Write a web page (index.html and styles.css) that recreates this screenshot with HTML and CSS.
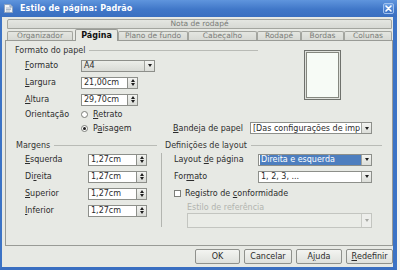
FILE: index.html
```html
<!DOCTYPE html>
<html lang="pt">
<head>
<meta charset="utf-8">
<title>Estilo de página: Padrão</title>
<link rel="stylesheet" href="styles.css">
</head>
<body>
<div class="window">
  <div class="titlebar">
    <svg class="app-icon" width="11" height="11" viewBox="0 0 11 11">
      <path d="M1.5 1.5h5.5l2.5 2.5v5.5h-8z" fill="#f2f4f7" stroke="#8fa3bf"/>
      <path d="M7 1.5v2.5h2.5" fill="#c9d3e0" stroke="#8fa3bf"/>
      <path d="M3 5h5M3 6.5h5M3 8h4" stroke="#9aa9bd" stroke-width="0.8"/>
    </svg>
    <span class="title">Estilo de página: Padrão</span>
    <span class="close">
      <svg width="7" height="7" viewBox="0 0 7 7"><path d="M1 1l5 5M6 1l-5 5" stroke="#fff" stroke-width="1.6" stroke-linecap="round"/></svg>
    </span>
  </div>
  <div class="client">
    <div class="tabrow tabrow-back">
      <div class="tab tab-wide">Nota de rodapé</div>
    </div>
    <div class="tabrow tabrow-front">
      <div class="tab t-org">Organizador</div>
      <div class="tab tab-active t-pag">Página</div>
      <div class="tab t-pla">Plano de fundo</div>
      <div class="tab t-cab">Cabeçalho</div>
      <div class="tab t-rod">Rodapé</div>
      <div class="tab t-bor">Bordas</div>
      <div class="tab t-col">Colunas</div>
    </div>
    <div class="panel">
      <div class="paper">
        <div class="paper-left">
          <div class="group-title"><span>Formato do papel</span></div>
          <div class="rows">
            <div class="row r17"><span class="lbl w56"><u>F</u>ormato</span>
              <div class="dropbtn w74"><span class="combo-text">A4</span><span class="arrow-btn"><i class="arrow"></i></span></div>
            </div>
            <div class="row r17"><span class="lbl w56"><u>L</u>argura</span>
              <div class="spin w57"><span class="spin-field">21,00cm</span><span class="spin-btns"></span></div>
            </div>
            <div class="row r17"><span class="lbl w56"><u>A</u>ltura</span>
              <div class="spin w57"><span class="spin-field">29,70cm</span><span class="spin-btns"></span></div>
            </div>
            <div class="row r13"><span class="lbl w56">Orientação</span>
              <span class="radio"></span><span class="opt"><u>R</u>etrato</span>
            </div>
          </div>
        </div>
        <div class="preview"></div>
        <div class="row r14 paper-last"><span class="lbl w56"></span>
          <span class="radio-cell"><span class="radio radio-on"></span><span class="opt">P<u>a</u>isagem</span></span>
          <span class="lbl w77"><u>B</u>andeja de papel</span>
          <div class="combo w122"><span class="combo-text">[Das configurações de imp</span><span class="arrow-btn"><i class="arrow"></i></span></div>
        </div>
      </div>
      <div class="layout">
        <div class="group-title gt-left"><span>Margens</span></div>
        <div class="group-title gt-right"><span>Definições de layout</span></div>
        <div class="margins">
          <div class="row r17"><span class="lbl w63"><u>E</u>squerda</span>
            <div class="spin w59"><span class="spin-field">1,27cm</span><span class="spin-btns"></span></div>
          </div>
          <div class="row r17"><span class="lbl w63">Di<u>r</u>eita</span>
            <div class="spin w59"><span class="spin-field">1,27cm</span><span class="spin-btns"></span></div>
          </div>
          <div class="row r17"><span class="lbl w63"><u>S</u>uperior</span>
            <div class="spin w59"><span class="spin-field">1,27cm</span><span class="spin-btns"></span></div>
          </div>
          <div class="row r17"><span class="lbl w63"><u>I</u>nferior</span>
            <div class="spin w59"><span class="spin-field">1,27cm</span><span class="spin-btns"></span></div>
          </div>
        </div>
        <div class="vsep"></div>
        <div class="settings">
          <div class="row r17"><span class="lbl w84">Layout <u>d</u>e página</span>
            <div class="combo w114"><span class="combo-text"><span class="sel">Direita e esquerda</span></span><span class="arrow-btn"><i class="arrow"></i></span></div>
          </div>
          <div class="row r17"><span class="lbl w84">For<u>m</u>ato</span>
            <div class="combo w114"><span class="combo-text">1, 2, 3, ...</span><span class="arrow-btn"><i class="arrow"></i></span></div>
          </div>
          <div class="row r17"><span class="check"></span><span class="opt">Registro de <u>c</u>onformidade</span></div>
          <div class="row r10 indent"><span class="lbl disabled">Estilo de referência</span></div>
          <div class="combo combo-disabled w185 indent-box"><span class="combo-text"></span><span class="arrow-btn"><i class="arrow"></i></span></div>
        </div>
      </div>
    </div>
    <div class="buttons">
      <span class="btn b-ok">OK</span>
      <span class="btn b-cancel">Cancelar</span>
      <span class="btn b-help">A<u>j</u>uda</span>
      <span class="btn b-reset"><u>R</u>edefinir</span>
    </div>
  </div>
</div>
</body>
</html>
```

FILE: styles.css
```css
* { box-sizing: border-box; }

body {
  margin: 0;
  width: 400px;
  height: 270px;
  overflow: hidden;
  background: #f4f5f3;
  font-family: "DejaVu Sans", "Liberation Sans", sans-serif;
  font-size: 8px;
  color: #2c2c2c;
}

u { text-decoration-thickness: 1px; text-underline-offset: 1px; }

.window {
  width: 397px;
  height: 270px;
  display: flex;
  flex-direction: column;
  background: #e7e9e4;
}

.titlebar {
  flex: none;
  height: 17px;
  display: flex;
  align-items: center;
  padding: 0 3px 0 3px;
  background: linear-gradient(#5f95dd, #4077c8 55%, #3a6fc0);
  color: #fff;
  font-weight: bold;
}

.app-icon { flex: none; margin-right: 6px; }
.title { flex: 1; letter-spacing: 0.1px; }

.close {
  width: 11px;
  height: 11px;
  display: flex;
  align-items: center;
  justify-content: center;
  border: 1px solid #9ec0ee;
  border-radius: 2px;
  background: linear-gradient(#6aa0e6, #3d72c4);
}

.client {
  flex: 1;
  display: flex;
  flex-direction: column;
  padding: 2px 0 0 3px;
  border-left: 2px solid #3c73c5;
  border-right: 4px solid #3c73c5;
  border-bottom: 3px solid #3a6fc1;
}

/* tabs */
.tabrow { display: flex; flex: none; margin-left: 2px; margin-right: 1px; }
.tabrow-back { height: 10px; }
.tabrow-front { height: 11px; align-items: flex-end; }

.tab {
  height: 9px;
  display: flex;
  align-items: center;
  justify-content: center;
  border: 1px solid #a3a59f;
  border-bottom: none;
  border-radius: 2px 2px 0 0;
  background: linear-gradient(#e4e6e1, #d7d9d4);
  color: #7a7c78;
  font-size: 7.5px;
  line-height: 1;
  white-space: nowrap;
}
.tab-wide { flex: 1; height: 10px; border-bottom: 1px solid #a3a59f; }
.tab-active {
  position: relative;
  z-index: 1;
  height: 12px;
  margin-bottom: -1px;
  background: #e7e9e4;
  color: #111;
  font-weight: bold;
  font-size: 8px;
  border-color: #999b96;
}
.t-org { width: 66px; margin-right: 2px; }
.t-pag { width: 43px; }
.t-pla { width: 70px; }
.t-cab { width: 69px; }
.t-rod { width: 44px; }
.t-bor { width: 43px; }
.t-col { width: 48px; }

/* panel */
.panel {
  flex: none;
  height: 206px;
  border: 1px solid #999b96;
  padding-top: 3px;
  background: #e7e9e4;
}

.group-title {
  height: 12px;
  display: flex;
  align-items: center;
  gap: 4px;
  color: #333;
  white-space: nowrap;
}
.group-title::after {
  content: "";
  flex: 1;
  height: 1px;
  background: #b9bbb6;
}

.paper {
  display: grid;
  grid-template-columns: 243px 1fr;
  padding-left: 9px;
}
.rows { padding-left: 10px; padding-top: 1px; }
.paper-last { grid-column: 1 / -1; padding-left: 10px; }

.preview {
  margin: 6px 0 0 46px;
  width: 37px;
  height: 50px;
  border: 1px solid #6f716c;
  background: #f7fbf6;
  box-shadow: inset 0 0 0 1px #dfe1dc, inset 0 0 0 2px #85877f;
}

.row { display: flex; align-items: center; white-space: nowrap; }
.r17 { height: 17px; }
.r14 { height: 14px; }
.r13 { height: 13px; }
.r10 { height: 10px; }

.lbl { flex: none; }
.w56 { width: 56px; }
.w63 { width: 63px; }
.w77 { width: 77px; }
.w84 { width: 84px; }

.radio-cell { width: 92px; display: flex; align-items: center; }

.radio {
  flex: none;
  width: 7px;
  height: 7px;
  border: 1px solid #7c7e79;
  border-radius: 50%;
  background: #fff;
  margin-right: 5px;
  display: flex;
  align-items: center;
  justify-content: center;
}
.radio-on::after {
  content: "";
  width: 3px;
  height: 3px;
  border-radius: 50%;
  background: #1d1d1d;
}

.check {
  flex: none;
  width: 7px;
  height: 7px;
  border: 1px solid #7c7e79;
  background: #fff;
  margin-right: 4px;
}

/* combos */
.combo, .dropbtn {
  flex: none;
  height: 12px;
  display: flex;
  border: 1px solid #8d8f8a;
  background: #fff;
}
.dropbtn { background: linear-gradient(#eceee9, #d9dbd6); }
.combo-text {
  flex: 1;
  display: flex;
  align-items: center;
  padding-left: 2px;
  overflow: hidden;
  white-space: nowrap;
}
.arrow-btn {
  flex: none;
  width: 10px;
  display: flex;
  align-items: center;
  justify-content: center;
  border-left: 1px solid #a3a59f;
  background: linear-gradient(#f3f4f1, #dcded9);
}
.arrow {
  width: 0;
  height: 0;
  border-left: 2.5px solid transparent;
  border-right: 2.5px solid transparent;
  border-top: 3px solid #1f1f1f;
}
.sel {
  background: #4d7ebf;
  color: #fff;
  align-self: stretch;
  display: flex;
  align-items: center;
  flex: 1;
  margin-left: -1px;
  padding-left: 1px;
}

.combo-disabled {
  height: 15px;
  border-color: #c3c5c0;
  background: #eaece7;
}
.combo-disabled .arrow-btn { border-left-color: #c9cbc6; background: #edeeeb; }
.combo-disabled .arrow { border-top-color: #a6a8a3; }

.w74 { width: 74px; }
.w114 { width: 114px; }
.w122 { width: 122px; }
.w185 { width: 185px; }

/* spin boxes */
.spin { flex: none; height: 12px; display: flex; }
.w57 { width: 57px; }
.w59 { width: 59px; }
.spin-field {
  flex: 1;
  display: flex;
  align-items: center;
  padding-left: 2px;
  border: 1px solid #8d8f8a;
  background: #fff;
}
.spin-btns {
  flex: none;
  width: 10px;
  display: flex;
  flex-direction: column;
  align-items: center;
  justify-content: center;
  gap: 1px;
  border: 1px solid #8d8f8a;
  border-left: none;
  background: linear-gradient(#f3f4f1, #d9dbd6);
}
.spin-btns::before, .spin-btns::after {
  content: "";
  width: 0;
  height: 0;
  border-left: 2.5px solid transparent;
  border-right: 2.5px solid transparent;
}
.spin-btns::before { border-bottom: 3px solid #1f1f1f; }
.spin-btns::after { border-top: 3px solid #1f1f1f; }

/* layout section */
.layout {
  display: grid;
  grid-template-columns: 155px 1px 1fr;
  grid-template-rows: 12px auto;
  margin-top: 4px;
}
.gt-left { grid-column: 1; padding: 0 4px 0 10px; }
.gt-right { grid-column: 2 / 4; padding: 0 10px 0 4px; }
.margins { grid-column: 1; grid-row: 2; padding-left: 19px; }
.vsep {
  grid-column: 2;
  grid-row: 2;
  margin-top: 2px;
  height: 74px;
  background: #b3b5b0;
}
.settings { grid-column: 3; grid-row: 2; padding-left: 12px; }
.indent { padding-left: 13px; }
.indent-box { margin: 1px 0 0 13px; }
.disabled { color: #b2b4af; }

/* buttons */
.buttons {
  flex: none;
  display: flex;
  justify-content: flex-end;
  gap: 4px;
  margin-top: 3px;
  height: 15px;
}
.btn {
  display: flex;
  align-items: center;
  justify-content: center;
  border: 1px solid #8f918c;
  border-radius: 2px;
  background: linear-gradient(#f3f4f1, #dfe1dc);
  color: #2c2c2c;
}
.b-ok { width: 45px; }
.b-cancel { width: 48px; }
.b-help { width: 46px; }
.b-reset { width: 47px; }
```
